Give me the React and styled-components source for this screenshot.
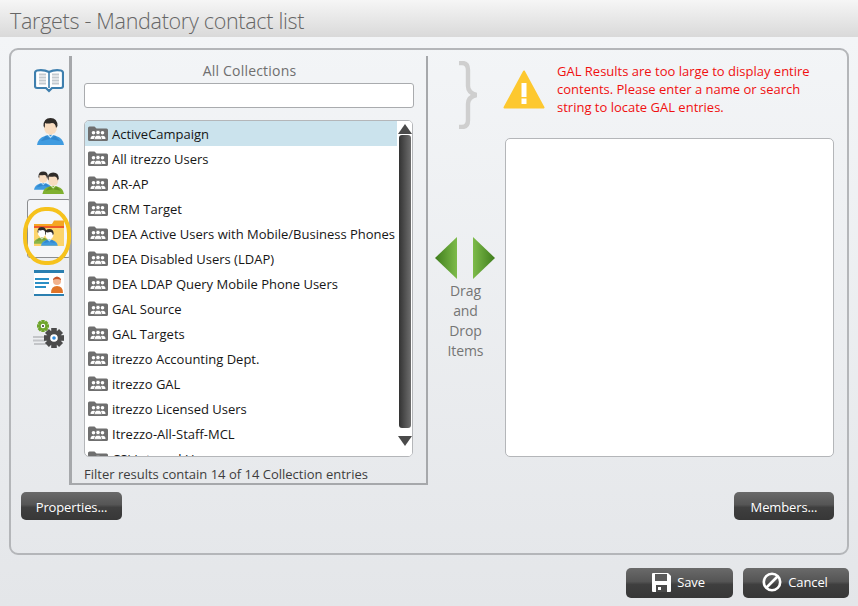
import React from "react";
import styled, { createGlobalStyle } from "styled-components";

const collections = [
  "ActiveCampaign",
  "All itrezzo Users",
  "AR-AP",
  "CRM Target",
  "DEA Active Users with Mobile/Business Phones",
  "DEA Disabled Users (LDAP)",
  "DEA LDAP Query Mobile Phone Users",
  "GAL Source",
  "GAL Targets",
  "itrezzo Accounting Dept.",
  "itrezzo GAL",
  "itrezzo Licensed Users",
  "Itrezzo-All-Staff-MCL",
  "CSI Internal Users",
];

const GlobalStyle = createGlobalStyle`
  html, body { margin: 0; padding: 0; }
  body { font-family: "Open Sans", "Noto Sans", "Liberation Sans", sans-serif; }
  * { box-sizing: border-box; }
`;

const Page = styled.div`
  width: 858px;
  height: 606px;
  overflow: hidden;
  display: flex;
  flex-direction: column;
  background: linear-gradient(#f4f6f8, #e4e6e9);
`;

const TitleBar = styled.div`
  height: 37px;
  padding-left: 10px;
  font-size: 21.5px;
  font-weight: 300;
  line-height: 42px;
  letter-spacing: -0.3px;
  color: #666;
  background: linear-gradient(#f6f6f6, #d9d9d9);
`;

const Panel = styled.div`
  margin: 11px 9px 0 9px;
  height: 507px;
  border: 2px solid #b4b6b9;
  border-radius: 9px;
  padding-top: 6px;
  display: flex;
  flex-direction: column;
`;

const Columns = styled.div`
  display: flex;
  height: 429px;
`;

const Sidebar = styled.div`
  width: 58px;
  flex: none;
  display: flex;
  flex-direction: column;
`;

const SideItem = styled.div`
  position: relative;
  height: 50.5px;
  display: flex;
  align-items: center;
  justify-content: flex-end;
  padding-right: 5px;
`;

const SelectedTile = styled.div`
  position: absolute;
  left: 16px;
  top: -9px;
  width: 44px;
  height: 59px;
  border: 1px solid #8b8d90;
  border-radius: 3px;
  background: #f5f6f8;
`;

const Ring = styled.div`
  position: absolute;
  left: 12px;
  top: -4px;
  width: 48px;
  height: 58px;
  margin-top: 3px;
  border: 4px solid #f6c21c;
  border-radius: 46%;
  z-index: 2;
`;

const IconWrap = styled.div`
  position: relative;
  z-index: 1;
  line-height: 0;
`;

const Collections = styled.section`
  width: 359px;
  flex: none;
  border-left: 3px solid #a6a8ab;
  border-right: 2px solid #a6a8ab;
  border-bottom: 2px solid #a6a8ab;
  padding: 6px 13px 0 12px;
  position: relative;
`;

const Heading = styled.div`
  text-align: center;
  padding-left: 2px;
  font-size: 14px;
  line-height: 18px;
  letter-spacing: 0.2px;
  color: #6f6f6f;
`;

const SearchBox = styled.input`
  display: block;
  width: 330px;
  height: 25px;
  margin-top: 3px;
  border: 1px solid #a9abae;
  border-radius: 3px;
  background: #fff;
  outline: none;
`;

const ListBox = styled.div`
  position: relative;
  width: 329px;
  height: 337px;
  margin-top: 12px;
  border: 1px solid #b4b6b9;
  border-radius: 5px;
  background: #fff;
  overflow: hidden;
`;

const Row = styled.div`
  width: 313px;
  height: 25px;
  display: flex;
  align-items: center;
  gap: 4px;
  padding-left: 3px;
  font-size: 13px;
  color: #161616;
  white-space: nowrap;
  background: ${(p) => (p.$active ? "#cbe3ed" : "transparent")};
`;

const Scrollbar = styled.div`
  position: absolute;
  right: 0;
  top: 0;
  bottom: 0;
  width: 15px;
  display: flex;
  flex-direction: column;
  align-items: center;
  padding: 3px 0 5px;
  background: #fff;
`;

const ScrollThumb = styled.div`
  width: 12px;
  height: 293px;
  margin: 1px 0 8px;
  border-radius: 3px;
  background: linear-gradient(90deg, #333, #6e6e6e);
`;

const ScrollArrow = styled.div`
  width: 0;
  height: 0;
  border-left: 7px solid transparent;
  border-right: 7px solid transparent;
  ${(p) => (p.$down ? "border-top" : "border-bottom")}: 10px solid #4a4a4a;
`;

const ResultCount = styled.div`
  margin-top: 8px;
  font-size: 13px;
  line-height: 18px;
  color: #3d3d3d;
`;

const Middle = styled.div`
  width: 75px;
  flex: none;
  display: flex;
  flex-direction: column;
  align-items: center;
`;

const Brace = styled.div`
  height: 181px;
  line-height: 0;
  padding-top: 5px;
  align-self: flex-start;
  margin-left: 30px;
`;

const Arrows = styled.div`
  line-height: 0;
  margin-right: 2px;
`;

const DragHint = styled.div`
  margin-top: 2px;
  font-size: 14px;
  line-height: 20px;
  letter-spacing: -0.1px;
  text-align: center;
  color: #757575;
`;

const RightPane = styled.div`
  width: 331px;
  flex: none;
`;

const Warning = styled.div`
  display: flex;
  gap: 12px;
  height: 82px;
  padding-top: 7px;
`;

const WarningGlyph = styled.div`
  margin-top: 7px;
  line-height: 0;
`;

const WarningText = styled.div`
  width: 270px;
  font-size: 13px;
  line-height: 17.8px;
  color: #f01010;
`;

const ResultsBox = styled.div`
  width: 329px;
  height: 319px;
  margin-left: 2px;
  border: 1px solid #b4b6b9;
  border-radius: 5px;
  background: #fff;
`;

const PanelActions = styled.div`
  display: flex;
  justify-content: space-between;
  padding: 7px 13px 0 10px;
`;

const DarkButton = styled.button`
  height: ${(p) => (p.$tall ? "30px" : "28px")};
  width: ${(p) => p.$w}px;
  display: flex;
  align-items: center;
  justify-content: center;
  gap: 6px;
  padding: ${(p) => (p.$tall ? "0 2px 2px 0" : "2px 0 0")};
  border: none;
  border-radius: 5px;
  font-family: inherit;
  font-size: 13px;
  letter-spacing: -0.12px;
  color: #fff;
  background: linear-gradient(#6a6a6a 0%, #555 45%, #3f3f3f 55%, #373737 100%);
`;

const Footer = styled.div`
  display: flex;
  justify-content: flex-end;
  gap: 10px;
  padding: 13px 9px 0 0;
`;

const FolderUsers = () => (
  <svg width="20" height="15" viewBox="0 0 20 15">
    <path d="M0 2 Q0 0.5 1.5 0.5 H6.5 L8.5 2.5 H18.5 Q20 2.5 20 4 V13.5 Q20 15 18.5 15 H1.5 Q0 15 0 13.5 Z" fill="#6f6f6f" />
    <g fill="#fff">
      <circle cx="5.5" cy="6.8" r="1.8" />
      <path d="M2.5 13 Q2.5 9.8 5.5 9.8 Q8.5 9.8 8.5 13 Z" />
      <circle cx="14.5" cy="6.8" r="1.8" />
      <path d="M11.5 13 Q11.5 9.8 14.5 9.8 Q17.5 9.8 17.5 13 Z" />
    </g>
    <g fill="#fff" stroke="#6f6f6f" strokeWidth="0.7">
      <circle cx="10" cy="6.5" r="2.2" />
      <path d="M6.3 13.4 Q6.3 9.3 10 9.3 Q13.7 9.3 13.7 13.4 Z" />
    </g>
  </svg>
);

const BookIcon = () => (
  <svg width="30" height="24" viewBox="0 0 30 24">
    <path d="M15 3 Q10 0.5 3 1.5 Q1 2 1 4 V17 Q1 19 3 19 H12 L15 22 L18 19 H27 Q29 19 29 17 V4 Q29 2 27 1.5 Q20 0.5 15 3 Z" fill="#fff" stroke="#3e7fae" strokeWidth="2.2" />
    <path d="M15 3 V19" stroke="#3e7fae" strokeWidth="1.6" />
    <path d="M5 5.5 H12 M5 8.5 H12 M5 11.5 H12 M5 14.5 H12 M18 5.5 H25 M18 8.5 H25 M18 11.5 H25 M18 14.5 H25" stroke="#c4cacf" strokeWidth="1.9" />
  </svg>
);

const Person = ({ x = 0, y = 0, s = 1, shirt = "#3f9be0", dark = "#2f7fc4", skin = "#f8dcc0" }) => (
  <g transform={`translate(${x} ${y}) scale(${s})`}>
    <path d="M0 27 Q1 20 8 18 L13.5 16 L19 18 Q26 20 27 27 Z" fill={shirt} />
    <path d="M9 17.5 L13.5 21 L18 17.5 L23 23 L13.5 21 L4 23 Z" fill={dark} opacity="0.7" />
    <ellipse cx="13.5" cy="9" rx="6.5" ry="8" fill={skin} />
    <path d="M13.5 0 Q20.5 0 20.5 8 L19 10 Q18.5 5 15 5 Q10 6 8 5 Q8 8 7.6 10 L6.5 8 Q6.5 0 13.5 0 Z" fill="#2f2b28" />
    <path d="M10.5 15 L13.5 18.5 L16.5 15 L16.5 17 L13.5 20 L10.5 17 Z" fill="#fff" opacity="0.75" />
  </g>
);

const UserIcon = () => (
  <svg width="27" height="27" viewBox="0 0 27 27">
    <Person />
  </svg>
);

const UsersIcon = () => (
  <svg width="30" height="23" viewBox="0 0 30 23">
    <Person s={0.68} y={0.5} />
    <Person x={8.4} s={0.8} y={1.4} shirt="#7fb02f" dark="#5e8a1f" />
  </svg>
);

const FolderIcon = () => (
  <svg width="30" height="26" viewBox="0 0 30 26">
    <path d="M0 4 H18 L20 0.5 H30 V26 H0 Z" fill="#f5a623" />
    <path d="M0 6 H30 V8 H0 Z" fill="#ef5a28" />
    <path d="M0 8 H30 V26 H0 Z" fill="#fcd46b" />
    <Person x={-0.5} y={7} s={0.62} shirt="#8bb64a" dark="#6d9a33" skin="#fff" />
    <Person x={7} y={9} s={0.62} skin="#fff" />
  </svg>
);

const CardIcon = () => (
  <svg width="30" height="26" viewBox="0 0 30 26">
    <rect width="30" height="26" fill="#fff" />
    <rect width="30" height="3" fill="#2b7fb0" />
    <rect y="24" width="30" height="2" fill="#2b7fb0" />
    <path d="M1 9 H15 M1 13 H15 M1 17 H12" stroke="#2b8fc5" strokeWidth="2" />
    <circle cx="23" cy="11" r="4" fill="#f2b28c" />
    <path d="M19 9 Q23 4 27 9 L27 10 Q23 8 19 10 Z" fill="#c8572a" />
    <path d="M17 23 Q17 16 23 16 Q29 16 29 23 Z" fill="#e07428" />
  </svg>
);

const Gear = ({ cx, cy, r, teeth, fill, eye }) => {
  const bits = [];
  for (let i = 0; i < teeth; i++) {
    bits.push(
      <rect key={i} x={cx - r * 0.28} y={cy - r} width={r * 0.56} height={r * 0.4} fill={fill} transform={`rotate(${(360 / teeth) * i} ${cx} ${cy})`} />
    );
  }
  return (
    <g>
      {bits}
      <circle cx={cx} cy={cy} r={r * 0.72} fill={fill} />
      <circle cx={cx} cy={cy} r={r * 0.38} fill="#fff" />
      <circle cx={cx} cy={cy} r={r * 0.18} fill={eye} />
    </g>
  );
};

const SettingsIcon = () => (
  <svg width="31" height="28" viewBox="0 0 31 28">
    <path d="M0 17 H13 M0 20.5 H12 M1 24 H13" stroke="#c3c5c8" strokeWidth="1.8" />
    <Gear cx={10} cy={6} r={6} teeth={8} fill="#6fa52d" eye="#3b3b3b" />
    <Gear cx={21} cy={18} r={10} teeth={8} fill="#4b4b4b" eye="#2f8de0" />
  </svg>
);

const BraceIcon = () => (
  <svg width="20" height="68" viewBox="0 0 20 68">
    <path d="M1 2 H4 Q10 2 10 9 V25 Q10 32 18.5 34 Q10 36 10 43 V59 Q10 66 4 66 H1" fill="none" stroke="#cfcfcf" strokeWidth="4.4" />
  </svg>
);

const WarningIcon = () => (
  <svg width="42" height="39" viewBox="0 0 42 39">
    <path d="M21 1.5 L40.5 37.5 H1.5 Z" fill="#fdc82f" stroke="#fdc82f" strokeWidth="2" strokeLinejoin="round" />
    <path d="M18.5 13 H23.5 V27 H18.5 Z M18.5 28.5 H23.5 V34 H18.5 Z" fill="#fff" />
  </svg>
);

const ArrowsIcon = () => (
  <svg width="60" height="42" viewBox="0 0 60 42">
    <defs>
      <linearGradient id="arrowLeft" x1="0" x2="1" y1="0" y2="0">
        <stop offset="0" stopColor="#3f7d1c" />
        <stop offset="1" stopColor="#7dbb4a" />
      </linearGradient>
      <linearGradient id="arrowRight" x1="0" x2="1" y1="0" y2="0">
        <stop offset="0" stopColor="#7dbb4a" />
        <stop offset="1" stopColor="#3f7d1c" />
      </linearGradient>
    </defs>
    <path d="M0 21 L22 0 V42 Z" fill="url(#arrowLeft)" />
    <path d="M38 0 L60 21 L38 42 Z" fill="url(#arrowRight)" />
  </svg>
);

const SaveIcon = () => (
  <svg width="19" height="19" viewBox="0 0 19 19">
    <path d="M1 0 H16 L19 3 V18 Q19 19 18 19 H1 Q0 19 0 18 V1 Q0 0 1 0 Z" fill="#fff" />
    <rect x="3" y="1" width="12" height="7" fill="#5a5a5a" />
    <rect x="4" y="12" width="11" height="7" fill="#4a4a4a" />
    <rect x="6" y="14" width="3" height="3" fill="#fff" />
  </svg>
);

const CancelIcon = () => (
  <svg width="20" height="20" viewBox="0 0 20 20">
    <circle cx="10" cy="10" r="8.2" fill="none" stroke="#fff" strokeWidth="2.6" />
    <path d="M4.5 15.5 L15.5 4.5" stroke="#fff" strokeWidth="2.6" />
  </svg>
);

export default function App() {
  return (
    <Page>
      <GlobalStyle />
      <TitleBar>Targets - Mandatory contact list</TitleBar>
      <Panel>
        <Columns>
          <Sidebar>
            <SideItem><IconWrap><BookIcon /></IconWrap></SideItem>
            <SideItem><IconWrap><UserIcon /></IconWrap></SideItem>
            <SideItem><IconWrap><UsersIcon /></IconWrap></SideItem>
            <SideItem>
              <SelectedTile />
              <IconWrap><FolderIcon /></IconWrap>
              <Ring />
            </SideItem>
            <SideItem><IconWrap><CardIcon /></IconWrap></SideItem>
            <SideItem><IconWrap><SettingsIcon /></IconWrap></SideItem>
          </Sidebar>
          <Collections>
            <Heading>All Collections</Heading>
            <SearchBox />
            <ListBox>
              {collections.map((name, i) => (
                <Row key={name} $active={i === 0}>
                  <FolderUsers />
                  {name}
                </Row>
              ))}
              <Scrollbar>
                <ScrollArrow />
                <ScrollThumb />
                <ScrollArrow $down />
              </Scrollbar>
            </ListBox>
            <ResultCount>Filter results contain 14 of 14 Collection entries</ResultCount>
          </Collections>
          <Middle>
            <Brace><BraceIcon /></Brace>
            <Arrows><ArrowsIcon /></Arrows>
            <DragHint>Drag<br />and<br />Drop<br />Items</DragHint>
          </Middle>
          <RightPane>
            <Warning>
              <WarningGlyph><WarningIcon /></WarningGlyph>
              <WarningText>GAL Results are too large to display entire contents. Please enter a name or search string to locate GAL entries.</WarningText>
            </Warning>
            <ResultsBox />
          </RightPane>
        </Columns>
        <PanelActions>
          <DarkButton $w={101}>Properties...</DarkButton>
          <DarkButton $w={100}>Members...</DarkButton>
        </PanelActions>
      </Panel>
      <Footer>
        <DarkButton $tall $w={107}><SaveIcon />Save</DarkButton>
        <DarkButton $tall $w={106}><CancelIcon />Cancel</DarkButton>
      </Footer>
    </Page>
  );
}
